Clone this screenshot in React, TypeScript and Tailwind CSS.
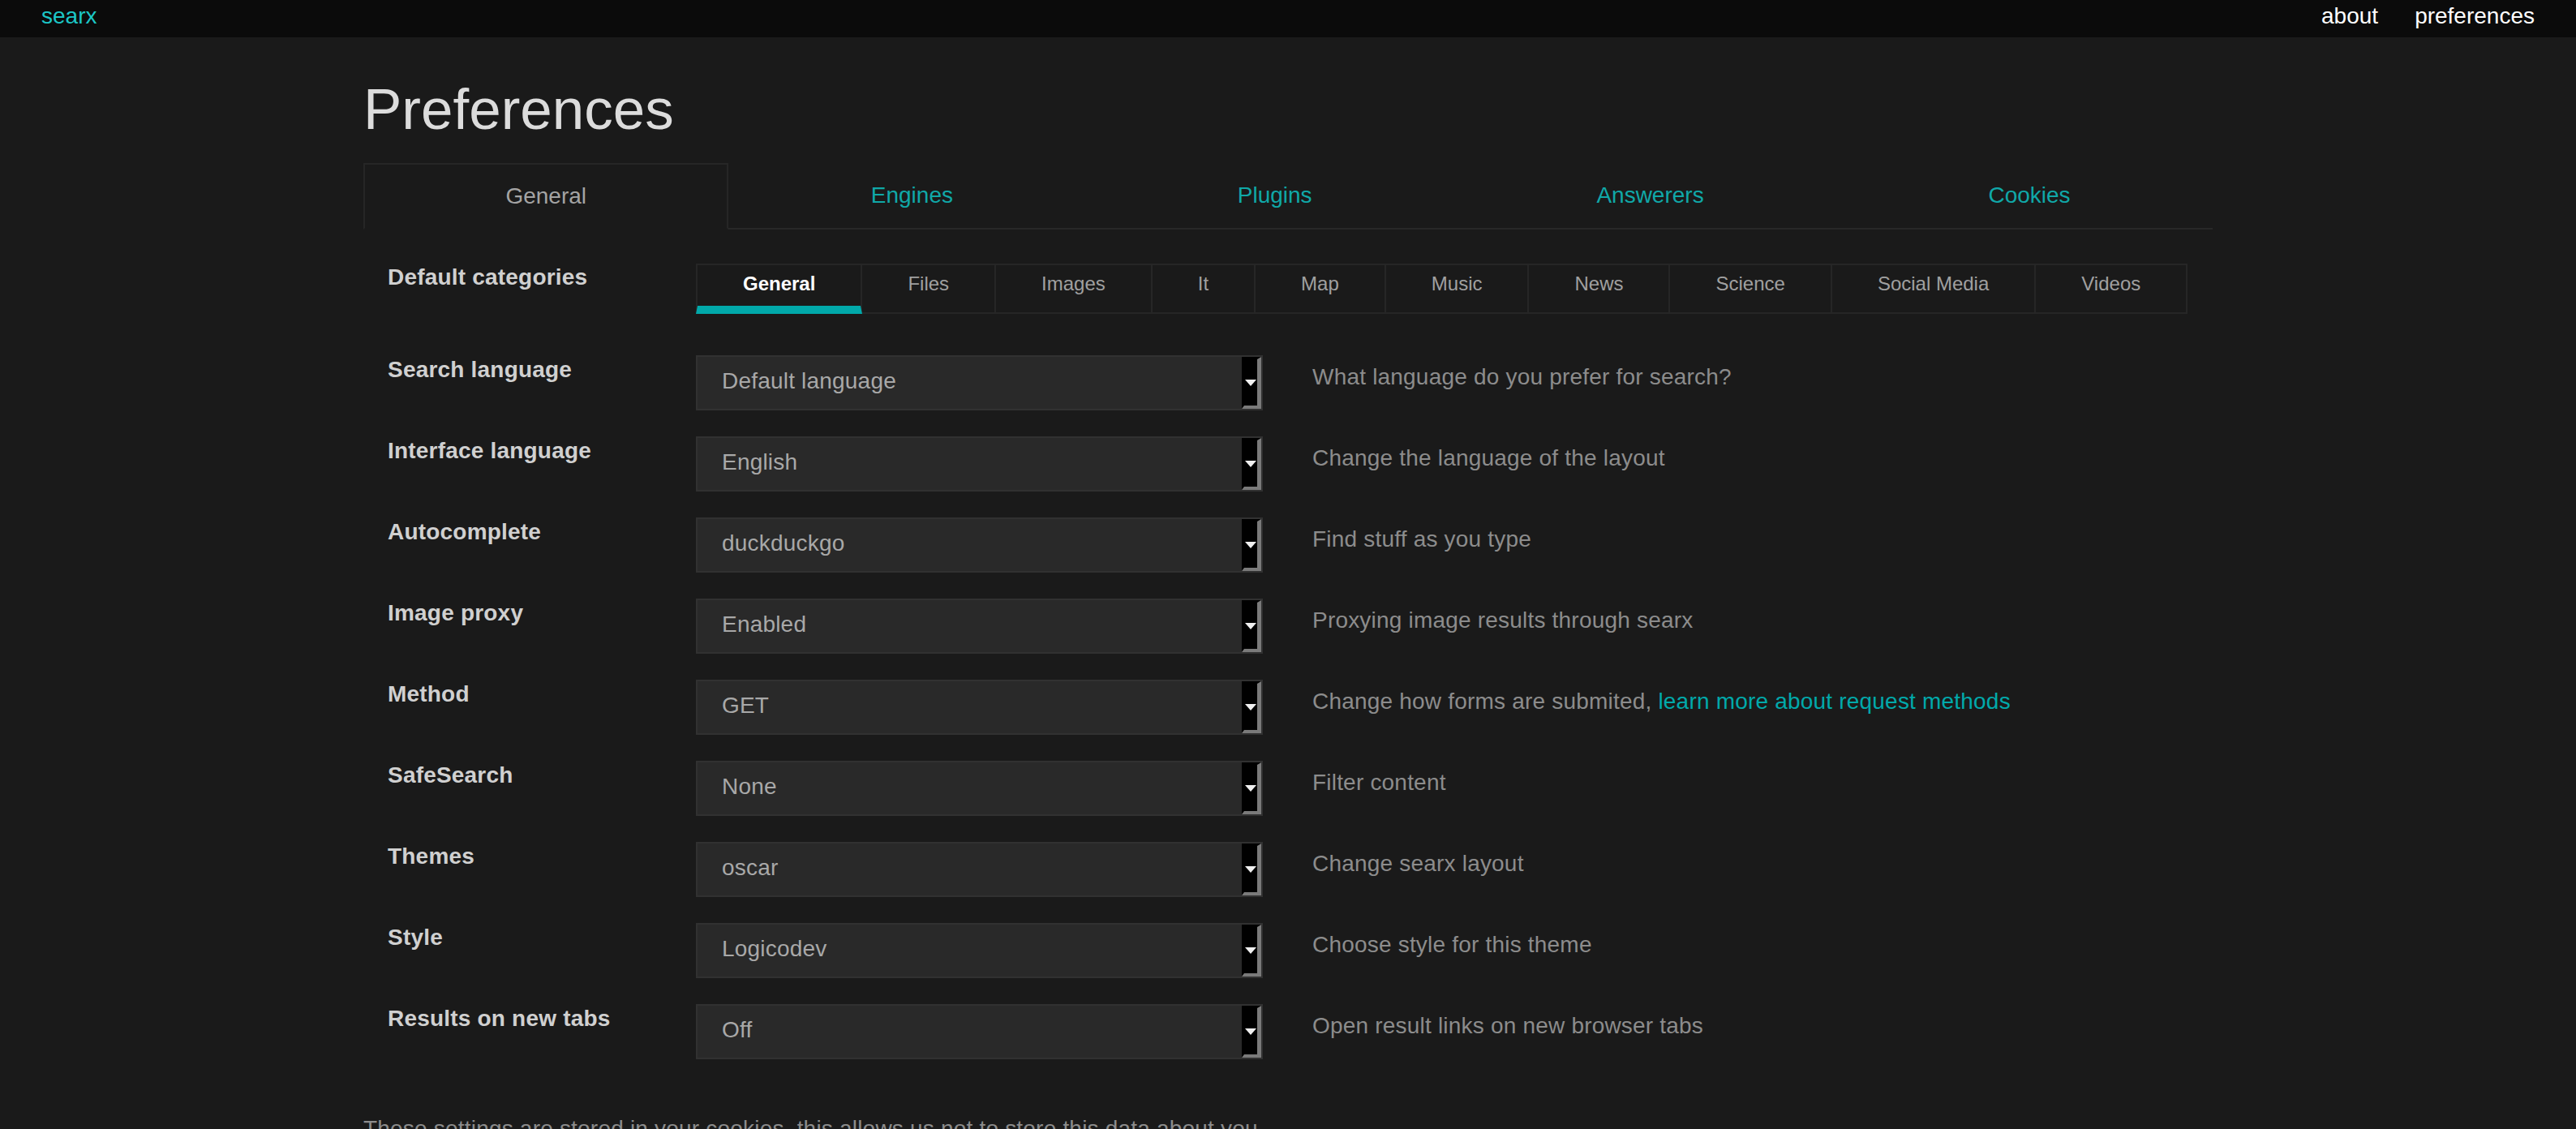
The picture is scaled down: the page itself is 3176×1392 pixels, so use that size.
import React from "react";

const rows: { label: string; value: string; desc: React.ReactNode }[] = [
  { label: "Search language", value: "Default language", desc: "What language do you prefer for search?" },
  { label: "Interface language", value: "English", desc: "Change the language of the layout" },
  { label: "Autocomplete", value: "duckduckgo", desc: "Find stuff as you type" },
  { label: "Image proxy", value: "Enabled", desc: "Proxying image results through searx" },
  {
    label: "Method",
    value: "GET",
    desc: (
      <>
        Change how forms are submited,{" "}
        <a className="text-[#01a9aa]">learn more about request methods</a>
      </>
    ),
  },
  { label: "SafeSearch", value: "None", desc: "Filter content" },
  { label: "Themes", value: "oscar", desc: "Change searx layout" },
  { label: "Style", value: "Logicodev", desc: "Choose style for this theme" },
  { label: "Results on new tabs", value: "Off", desc: "Open result links on new browser tabs" },
];

const categories = ["General", "Files", "Images", "It", "Map", "Music", "News", "Science", "Social Media", "Videos"];
const tabs = ["General", "Engines", "Plugins", "Answerers", "Cookies"];

function Select({ value }: { value: string }) {
  return (
    <div className="flex h-[68px] w-[699px] border-2 border-[#313131] bg-[#292929]">
      <div className="flex-1 pl-[30px] pt-[14px] text-[28px] leading-[32px] tracking-[0.2px] text-[#a8a8a8]">{value}</div>
      <div className="flex w-[24px] items-center justify-center border-b-[4px] border-l-[3px] border-r-[5px] border-t-[3px] border-b-[#7a7a7a] border-l-black border-r-[#7a7a7a] border-t-black bg-black">
        <svg width="14" height="8" viewBox="0 0 14 8">
          <polygon points="0,0 14,0 7,8" fill="#f0f0f0" />
        </svg>
      </div>
    </div>
  );
}

export default function App() {
  return (
    <div className="min-h-screen bg-[#1a1a1a]" style={{ fontFamily: '"Liberation Sans", Arial, sans-serif' }}>
      <nav className="flex h-[46px] items-start justify-between bg-[#0b0b0b] pl-[51px] pr-[51px] text-[28px] leading-[40px]">
        <a className="text-[#1cc6c6]">searx</a>
        <div className="flex gap-[45px] text-white">
          <a>about</a>
          <a>preferences</a>
        </div>
      </nav>

      <div className="mx-auto w-[2280px]">
        <h1 className="mt-[49px] text-[71px] font-normal leading-[79px] text-[#dcdcdc]">Preferences</h1>

        <ul className="mt-[27px] flex border-b-2 border-[#282828]">
          {tabs.map((t, i) => (
            <li
              key={t}
              className={
                i === 0
                  ? "-mb-[2px] flex h-[82px] flex-auto items-center justify-center border-2 border-[#262626] border-b-[#1a1a1a] bg-[#1a1a1a] text-[28px] text-[#a4a4a4]"
                  : "flex h-[80px] flex-auto items-center justify-center border-2 border-transparent text-[28px] text-[#10a8a8]"
              }
            >
              {t}
            </li>
          ))}
        </ul>

        <div className="pl-[30px]">
          <div className="mt-[42px] flex items-start">
            <div className="mt-[1px] w-[380px] text-[28px] font-bold leading-[32px] tracking-[0.2px] text-[#d0d0d0]">Default categories</div>
            <div className="flex">
              {categories.map((c, i) => (
                <div
                  key={c}
                  className={
                    (i === 0
                      ? "border-l-2 border-b-[10px] border-b-[#01a9aa] font-bold text-white "
                      : "border-b-2 border-b-[#262626] text-[#a0a0a0] ") +
                    "h-[62px] border-r-2 border-t-2 border-l-[#262626] border-r-[#262626] border-t-[#262626] px-[56px] pt-[6px] text-[24px] leading-[34px]"
                  }
                >
                  {c}
                </div>
              ))}
            </div>
          </div>

          <div className="mt-[51px] flex flex-col gap-[32px]">
            {rows.map((r) => (
              <div key={r.label} className="flex items-start">
                <div className="mt-[2px] w-[380px] text-[28px] font-bold leading-[32px] tracking-[0.2px] text-[#d0d0d0]">{r.label}</div>
                <Select value={r.value} />
                <div className="ml-[61px] mt-[11px] text-[28px] leading-[32px] tracking-[0.2px] text-[#8c8c8c]">{r.desc}</div>
              </div>
            ))}
          </div>
        </div>

        <p className="mt-[66px] text-[28px] leading-[40px] tracking-[0.2px] text-[#8c8c8c]">
          These settings are stored in your cookies, this allows us not to store this data about you.
        </p>
      </div>
    </div>
  );
}
